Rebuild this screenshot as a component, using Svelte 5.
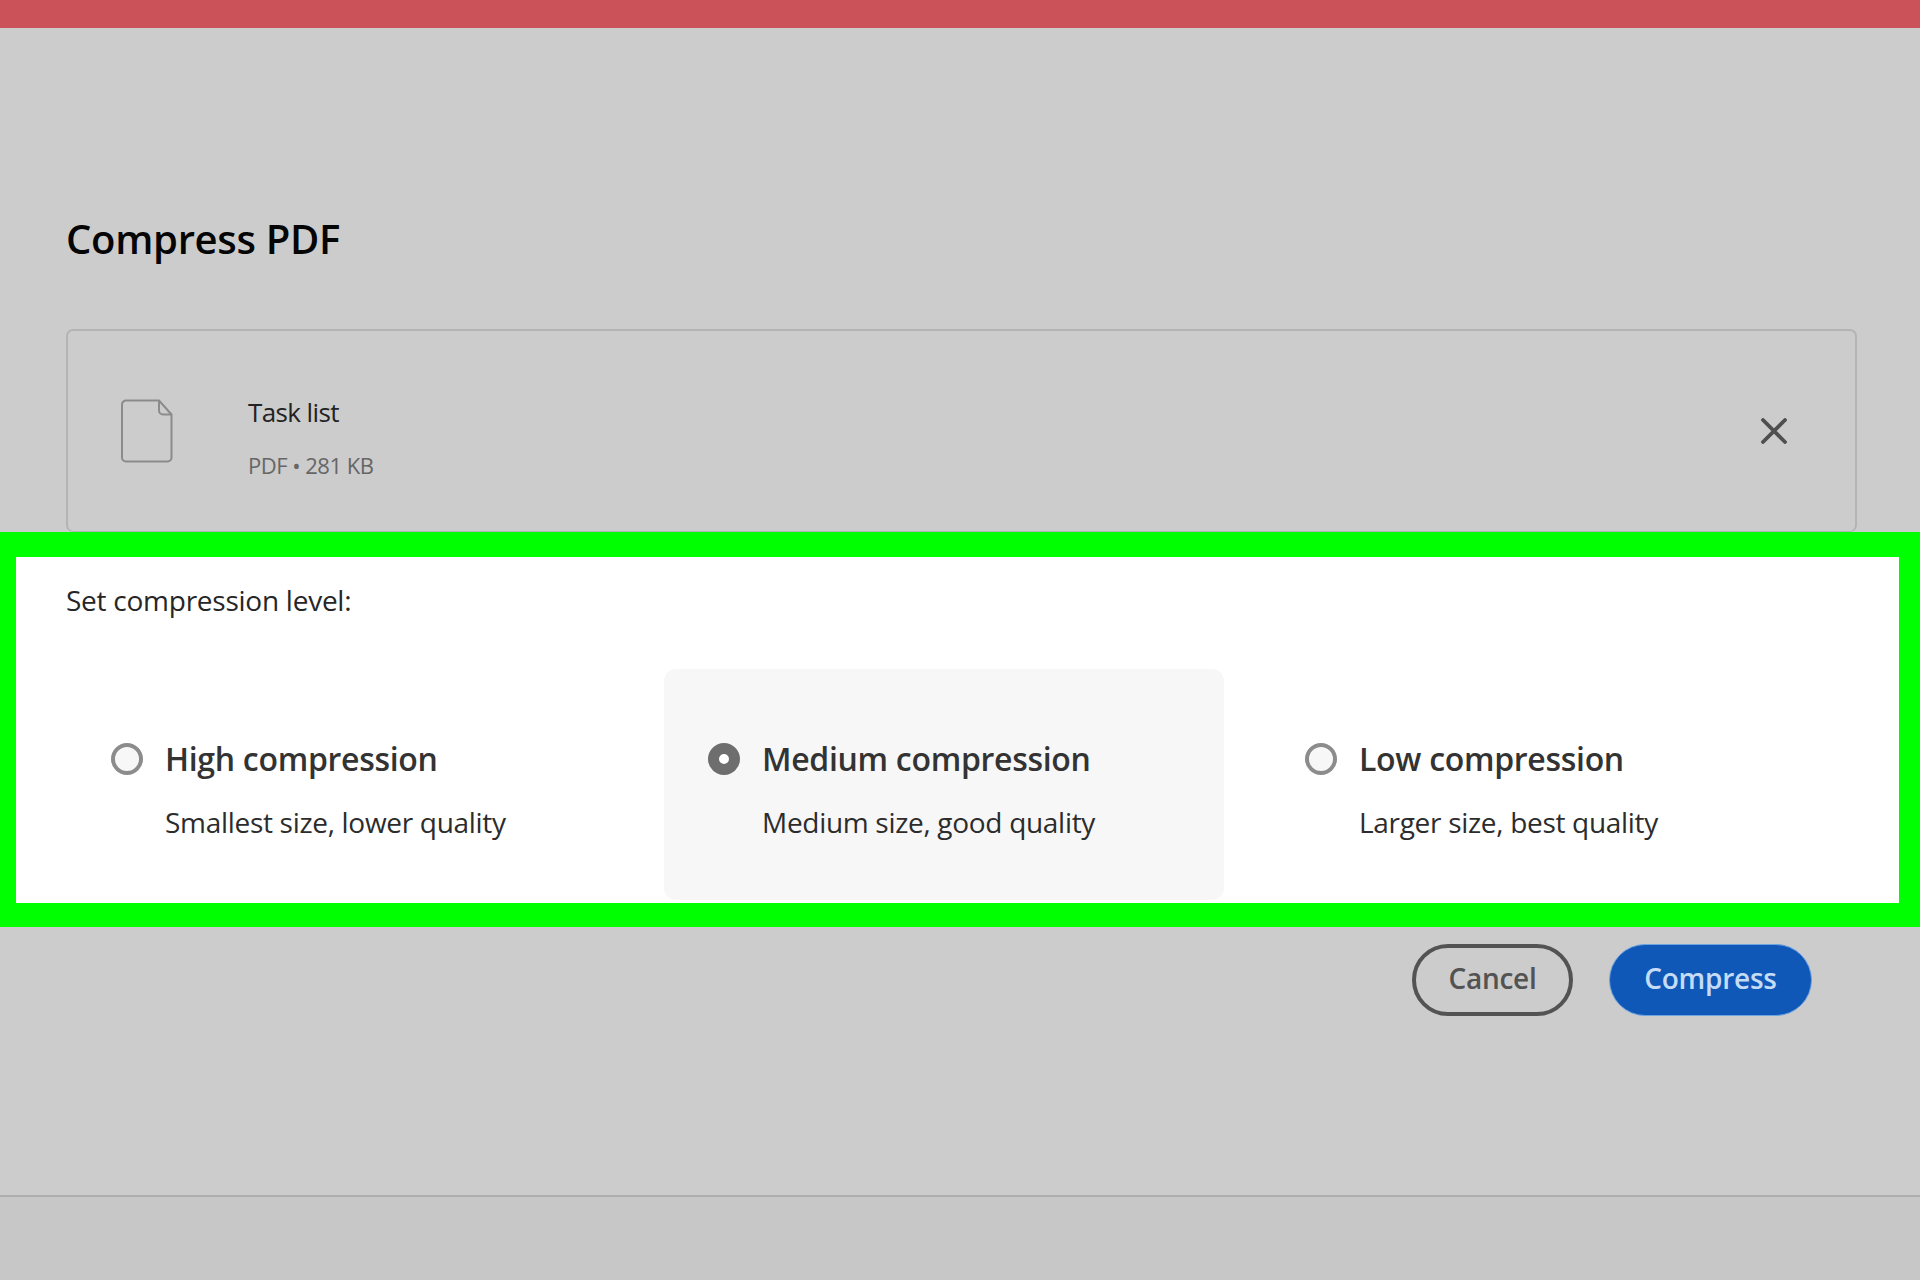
<script>
    const levels = [
        { name: 'High compression', hint: 'Smallest size, lower quality', checked: false },
        { name: 'Medium compression', hint: 'Medium size, good quality', checked: true },
        { name: 'Low compression', hint: 'Larger size, best quality', checked: false }
    ];
</script>

<div class="page">
    <div class="topbar"></div>

    <div class="content">
        <h1>Compress PDF</h1>
        <div class="file-card">
            <svg class="file-icon" viewBox="0 0 52 64" fill="none" stroke="#8b8b8b" stroke-width="2">
                <path d="M5 1.5h33l12.5 14v43a4 4 0 0 1-4 4H5a4 4 0 0 1-4-4v-53a4 4 0 0 1 4-4z" />
                <path d="M38 1.5v10a4 4 0 0 0 4 4h8.5" />
            </svg>
            <div class="file-text">
                <div class="file-name">Task list</div>
                <div class="file-meta">PDF • 281 KB</div>
            </div>
            <svg class="close" viewBox="0 0 26 26" fill="none" stroke="#4f4f4f" stroke-width="3.8" stroke-linecap="round">
                <path d="M2 2l22 22M24 2L2 24" />
            </svg>
        </div>
    </div>

    <section class="highlight">
        <div class="set-label">Set compression level:</div>
        <div class="levels">
            {#each levels as level}
                <div class="level" class:selected={level.checked}>
                    <span class="radio" class:checked={level.checked}></span>
                    <div class="level-text">
                        <div class="level-name">{level.name}</div>
                        <div class="level-hint">{level.hint}</div>
                    </div>
                </div>
            {/each}
        </div>
    </section>

    <div class="actions">
        <button class="cancel">Cancel</button>
        <button class="compress">Compress</button>
    </div>

    <div class="footer"></div>
</div>

<style>
    :global(body) {
        margin: 0;
        background: #cccccc;
    }

    .page {
        height: 1280px;
        display: flex;
        flex-direction: column;
        overflow: hidden;
        font-family: "Open Sans", "Noto Sans", sans-serif;
        background: #cccccc;
    }

    .topbar {
        height: 28px;
        background: #cb5258;
    }

    .content {
        padding: 184px 63px 0 66px;
    }

    h1 {
        margin: 0;
        height: 117px;
        font-size: 40px;
        line-height: 54px;
        font-weight: 600;
        letter-spacing: -0.3px;
        color: #050505;
    }

    .file-card {
        height: 200px;
        display: flex;
        align-items: center;
        border: 2px solid #b4b4b4;
        border-bottom-width: 1px;
        border-radius: 7px;
    }

    .file-icon {
        width: 52px;
        height: 64px;
        margin-left: 53px;
        flex: none;
    }

    .file-text {
        margin-left: 75px;
        padding-top: 11px;
        flex: 1;
    }

    .file-name {
        font-size: 26px;
        line-height: 36px;
        letter-spacing: -0.6px;
        color: #232323;
    }

    .file-meta {
        margin-top: 20px;
        font-size: 22px;
        line-height: 30px;
        letter-spacing: -0.5px;
        color: #666666;
    }

    .close {
        width: 26px;
        height: 26px;
        margin-right: 68px;
        flex: none;
    }

    .highlight {
        height: 346px;
        border: solid #00ff00;
        border-width: 25px 21px 24px 16px;
        background: #ffffff;
        overflow: hidden;
    }

    .set-label {
        margin: 25px 0 0 50px;
        font-size: 28px;
        line-height: 36px;
        letter-spacing: -0.25px;
        color: #262626;
    }

    .levels {
        display: grid;
        grid-template-columns: 560px 560px 560px;
        column-gap: 37px;
        margin: 51px 0 0 51px;
    }

    .level {
        height: 231px;
        display: flex;
        gap: 22px;
        padding: 72px 0 0 44px;
        box-sizing: border-box;
        border-radius: 12px;
    }

    .level.selected {
        background: #f7f7f7;
    }

    .radio {
        width: 32px;
        height: 32px;
        margin-top: 2px;
        flex: none;
        box-sizing: border-box;
        border: 4px solid #8c8c8c;
        border-radius: 50%;
        background: #f7f7f7;
    }

    .radio.checked {
        border: 11px solid #6e6e6e;
        background: #ffffff;
    }

    .level-name {
        font-size: 32px;
        line-height: 36px;
        font-weight: 600;
        letter-spacing: -0.3px;
        color: #333333;
    }

    .level-hint {
        margin-top: 27px;
        font-size: 28px;
        line-height: 36px;
        letter-spacing: -0.3px;
        color: #2c2c2c;
    }

    .actions {
        height: 270px;
        display: flex;
        justify-content: flex-end;
        align-items: flex-start;
        gap: 36px;
        padding: 17px 108px 0 0;
        box-sizing: border-box;
        border-bottom: 2px solid #aeaeae;
    }

    button {
        height: 72px;
        padding: 0 0 4px;
        border-radius: 36px;
        font-family: inherit;
        font-size: 28px;
        font-weight: 600;
        letter-spacing: -0.25px;
        box-sizing: border-box;
    }

    .cancel {
        width: 161px;
        background: transparent;
        border: 4px solid #535353;
        color: #535353;
    }

    .compress {
        width: 203px;
        background: #1058b8;
        border: 1px solid #6ea3e0;
        color: #c4dcf6;
    }

    .footer {
        flex: 1;
        background: #c7c7c7;
    }
</style>
